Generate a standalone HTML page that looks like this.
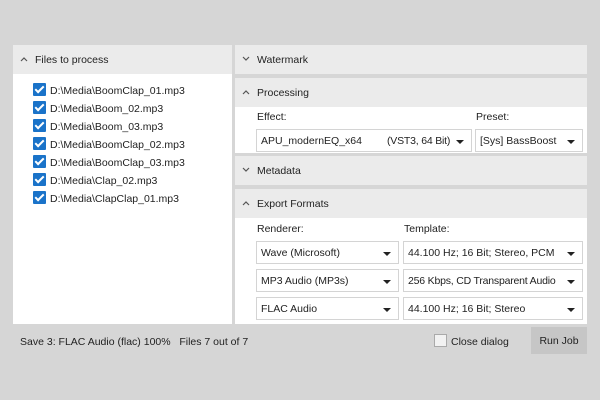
<!DOCTYPE html>
<html><head><style>
*{margin:0;padding:0;box-sizing:border-box}
body{width:600px;height:400px;background:#d6d6d6;font-family:"Liberation Sans",sans-serif;font-size:10.5px;color:#222;position:relative;overflow:hidden}
.a{position:absolute}
.hdr{background:#ebebeb;height:29px;line-height:31px;padding-left:22px}
.hdr svg{position:absolute;left:7px;top:11px}
.wh{background:#fff}
.dd{position:absolute;height:23px;border:1px solid #d4d4d4;background:#fff;line-height:23px;padding-left:4px;white-space:nowrap}
.dd:after{content:"";position:absolute;right:7px;top:10px;border-left:4px solid transparent;border-right:4px solid transparent;border-top:4px solid #222}
.cb{display:inline-block;width:13px;height:13px;background:#1a73c9;border-radius:1px;vertical-align:-2px;margin-right:4px;position:relative}
.cb:after{content:"";position:absolute;left:4px;top:1px;width:3px;height:7px;border:solid #fff;border-width:0 2px 2px 0;transform:rotate(45deg)}
.lbl{position:absolute}
</style></head><body>
<div class="a" style="left:13px;top:45px;width:219px;height:279px;background:#fff">
 <div class="hdr" style="position:relative"><svg width="8" height="6"><path d="M1 5L4 2L7 5" fill="none" stroke="#555" stroke-width="1.2"/></svg>Files to process</div>
 <div style="padding:8px 0 0 20px;line-height:18px">
  <div><span class="cb"></span>D:\Media\BoomClap_01.mp3</div>
  <div><span class="cb"></span>D:\Media\Boom_02.mp3</div>
  <div><span class="cb"></span>D:\Media\Boom_03.mp3</div>
  <div><span class="cb"></span>D:\Media\BoomClap_02.mp3</div>
  <div><span class="cb"></span>D:\Media\BoomClap_03.mp3</div>
  <div><span class="cb"></span>D:\Media\Clap_02.mp3</div>
  <div><span class="cb"></span>D:\Media\ClapClap_01.mp3</div>
 </div>
</div>
<div class="a hdr" style="left:235px;top:45px;width:352px"><svg width="8" height="6"><path d="M1 1L4 4L7 1" fill="none" stroke="#555" stroke-width="1.2"/></svg>Watermark</div>
<div class="a hdr" style="left:235px;top:78px;width:352px"><svg width="8" height="6"><path d="M1 5L4 2L7 5" fill="none" stroke="#555" stroke-width="1.2"/></svg>Processing</div>
<div class="a wh" style="left:235px;top:107px;width:352px;height:46px">
 <div class="lbl" style="left:22px;top:4px">Effect:</div>
 <div class="lbl" style="left:241px;top:4px">Preset:</div>
 <div class="dd" style="left:21px;top:22px;width:216px">APU_modernEQ_x64<span style="position:absolute;left:130px;letter-spacing:-0.2px">(VST3, 64 Bit)</span></div>
 <div class="dd" style="left:240px;top:22px;width:108px">[Sys] BassBoost</div>
</div>
<div class="a hdr" style="left:235px;top:156px;width:352px"><svg width="8" height="6"><path d="M1 1L4 4L7 1" fill="none" stroke="#555" stroke-width="1.2"/></svg>Metadata</div>
<div class="a hdr" style="left:235px;top:189px;width:352px"><svg width="8" height="6"><path d="M1 5L4 2L7 5" fill="none" stroke="#555" stroke-width="1.2"/></svg>Export Formats</div>
<div class="a wh" style="left:235px;top:218px;width:352px;height:106px">
 <div class="lbl" style="left:22px;top:5px">Renderer:</div>
 <div class="lbl" style="left:169px;top:5px">Template:</div>
 <div class="dd" style="left:21px;top:23px;width:143px">Wave (Microsoft)</div>
 <div class="dd" style="left:168px;top:23px;width:180px">44.100 Hz; 16 Bit; Stereo, PCM</div>
 <div class="dd" style="left:21px;top:51px;width:143px">MP3 Audio (MP3s)</div>
 <div class="dd" style="left:168px;top:51px;width:180px;letter-spacing:-0.2px">256 Kbps, CD Transparent Audio</div>
 <div class="dd" style="left:21px;top:79px;width:143px">FLAC Audio</div>
 <div class="dd" style="left:168px;top:79px;width:180px">44.100 Hz; 16 Bit; Stereo</div>
</div>
<div class="a" style="left:20px;top:336px">Save 3: FLAC Audio (flac) 100% &nbsp;&nbsp;Files 7 out of 7</div>
<div class="a" style="left:434px;top:334px;width:13px;height:13px;border:1px solid #aaa;background:#f2f2f2"></div>
<div class="a" style="left:451px;top:336px">Close dialog</div>
<div class="a" style="left:531px;top:327px;width:56px;height:27px;background:#c6c6c6;text-align:center;line-height:29px">Run Job</div>
</body></html>
